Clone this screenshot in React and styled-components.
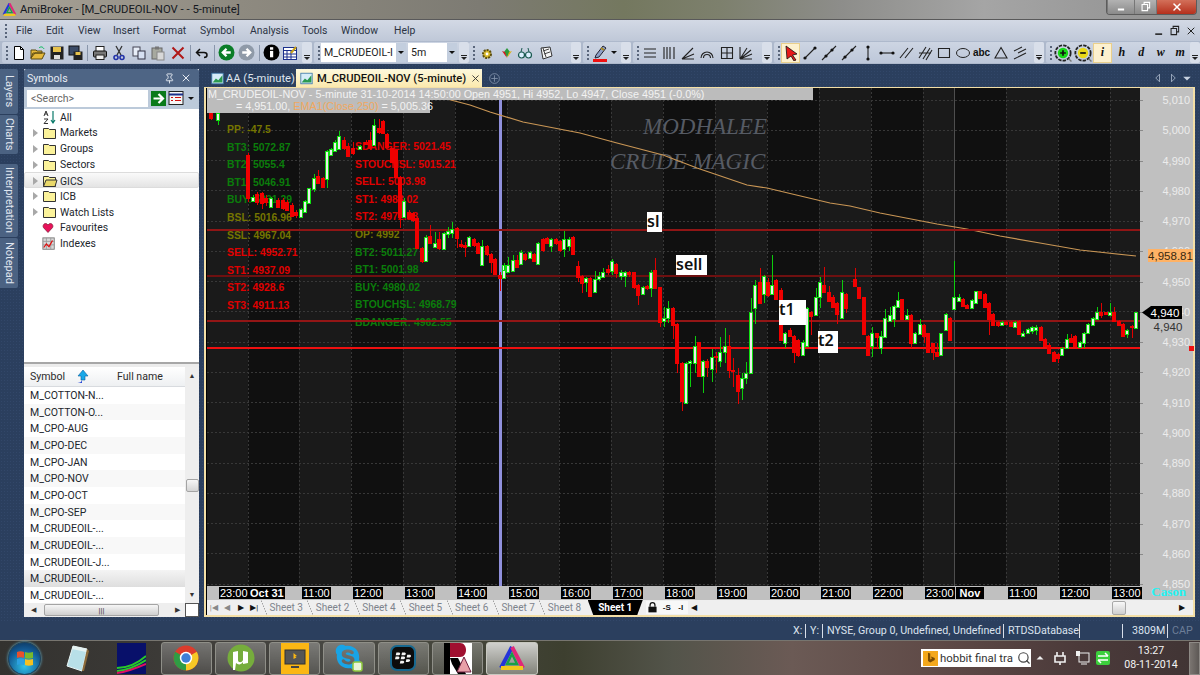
import React from 'react'
import styled, { createGlobalStyle } from 'styled-components'
import { FaBlackberry, FaSkype } from 'react-icons/fa'
import { Pin, X, Search } from 'lucide-react'

const GlobalStyle = createGlobalStyle`
    html, body { margin: 0; padding: 0; background: #2b3f5e; }
    * { box-sizing: border-box; }
    svg { flex: none; }
`

const UI = 'Roboto, "Noto Sans", sans-serif'
const CHART = '"Liberation Sans", Arial, sans-serif'

const Page = styled.div`
    width: 1200px;
    height: 675px;
    overflow: hidden;
    display: flex;
    flex-direction: column;
    background: #2b3f5e;
    font-family: ${UI};
`

/* title bar */
const TitleBar = styled.div`
    height: 20px;
    flex: none;
    display: flex;
    align-items: center;
    padding-left: 2px;
    gap: 3px;
    font-size: 11.3px;
    color: #14181e;
    background: linear-gradient(90deg, #a8a297 0, #8e8a80 20%, #7d7b73 40%, #74785f 52%, #7d806d 60%, #8d8d8a 70%, #a5a5a5 82%, #8f8f8f 100%);
    border-bottom: 1px solid #59595a;
`
const WindowButtons = styled.div`
    margin-left: auto;
    margin-right: 3px;
    margin-top: -5px;
    height: 16px;
    display: flex;
    border: 1px solid #5c5c5c;
    border-top: 0;
    border-radius: 0 0 4px 4px;
    overflow: hidden;
`
const WindowButton = styled.span`
    width: ${p => p.$w}px;
    display: flex;
    align-items: center;
    justify-content: center;
    background: ${p => p.$close ? 'linear-gradient(#d5745e, #b5301c)' : 'linear-gradient(#b5b5b5, #8a8a8a)'};
    border-left: 1px solid #777;
`

/* menu */
const MenuBar = styled.div`
    height: 21px;
    flex: none;
    display: flex;
    align-items: center;
    padding-left: 4px;
    background: linear-gradient(#d3d9e5, #bfc8d8);
    font-size: 10.4px;
    color: #2c3444;
`
const Grip = styled.span`
    width: 4px;
    height: 15px;
    flex: none;
    background: radial-gradient(circle, #59657a 1px, transparent 1.2px) 0 0 / 4px 4px;
`
const MenuItem = styled.span`
    width: ${p => p.$w}px;
    flex: none;
`
const MdiButtons = styled.div`
    margin-left: auto;
    display: flex;
    gap: 5px;
    padding-right: 3px;
    align-items: center;
`

/* toolbar */
const ToolBar = styled.div`
    height: 23px;
    flex: none;
    display: flex;
    gap: 2px;
    padding: 1px 0 1px 2px;
    background: #aeb9cc;
`
const ToolGroup = styled.div`
    width: ${p => p.$w}px;
    flex: none;
    display: flex;
    align-items: center;
    padding-left: 3px;
    background: linear-gradient(#cdd5e3, #bdc7d9);
    border-radius: 2px;
`
const ToolBtn = styled.span`
    width: ${p => p.$w || 19}px;
    height: 20px;
    flex: none;
    display: flex;
    align-items: center;
    justify-content: center;
    ${p => p.$on && 'background: #fdf1cf; border: 1px solid #e9cf8c;'}
`
const ToolLetter = styled.span`
    font: bold italic 12px "Liberation Serif", serif;
    color: #111;
`
const ToolText = styled.span`
    font: bold 10px ${CHART};
    color: #111;
`
const ToolSep = styled.span`
    width: ${p => p.$w || 5}px;
    height: 16px;
    flex: none;
    background: linear-gradient(#8996ab, #8996ab) center / 1px 100% no-repeat;
`
const Overflow = styled.span`
    width: 10px;
    height: 21px;
    flex: none;
    margin-left: auto;
    display: flex;
    flex-direction: column;
    align-items: center;
    justify-content: flex-end;
    padding-bottom: 3px;
    gap: 1px;
    background: #d9dfea;
    border-radius: 2px;
    &::before { content: ''; width: 6px; height: 1px; background: #222; }
    &::after { content: ''; border: 3px solid transparent; border-top: 3px solid #222; border-bottom: 0; }
`
const Combo = styled.div`
    width: ${p => p.$w}px;
    height: 19px;
    flex: none;
    margin-right: 2px;
    display: flex;
    align-items: center;
    justify-content: space-between;
    padding-left: 3px;
    background: #fff;
    font-size: 10.6px;
    color: #222;
    white-space: nowrap;
    overflow: hidden;
`
const ComboArrow = styled.span`
    width: ${p => p.$w || 10}px;
    height: 19px;
    flex: none;
    display: flex;
    align-items: center;
    justify-content: center;
    background: ${p => p.$bare ? 'transparent' : '#c3cede'};
    &::after { content: ''; border: 3px solid transparent; border-top: 3px solid #111; border-bottom: 0; }
`

/* workspace */
const Workspace = styled.div`
    height: 558px;
    flex: none;
    display: flex;
    padding-top: 5px;
    background: #2b3f5e radial-gradient(circle, #324769 0.6px, transparent 0.8px) 0 0 / 3px 3px;
`
const SideTabs = styled.div`
    width: 24px;
    flex: none;
    display: flex;
    flex-direction: column;
    align-items: flex-start;
`
const SideTab = styled.div`
    width: 18px;
    height: ${p => p.$h}px;
    margin-bottom: ${p => p.$gap || 1}px;
    writing-mode: vertical-rl;
    display: flex;
    align-items: center;
    justify-content: center;
    font-size: 11px;
    color: #e0e6f0;
    background: #4b6282;
    border-radius: 0 2px 2px 0;
`

/* symbols panel */
const Panel = styled.div`
    width: 175px;
    height: 548px;
    flex: none;
    margin-right: 5px;
    display: flex;
    flex-direction: column;
    background: #fff;
`
const PanelHead = styled.div`
    height: 18px;
    flex: none;
    display: flex;
    align-items: center;
    justify-content: space-between;
    padding: 0 4px 0 3px;
    font-size: 10.6px;
    color: #e6ebf3;
    background: #4e6585;
    border-radius: 2px 2px 0 0;
`
const SearchRow = styled.div`
    height: 22px;
    flex: none;
    display: flex;
    align-items: center;
    padding-left: 3px;
    background: #bccada;
`
const SearchInput = styled.div`
    width: 121px;
    height: 17px;
    flex: none;
    margin-right: 3px;
    padding-left: 4px;
    font-size: 10.5px;
    line-height: 17px;
    color: #666;
    background: #fff;
`
const Tree = styled.div`
    height: 253px;
    flex: none;
    background: #fff;
`
const TreeRow = styled.div`
    height: 15.85px;
    display: grid;
    grid-template-columns: 10px 18px 1fr;
    align-items: center;
    padding-left: 8px;
    font-size: 10.4px;
    color: #22262c;
    ${p => p.$sel && 'background: linear-gradient(#fafafa, #e4e4e4); border: 1px solid #dcdcdc; border-radius: 2px; padding-left: 7px;'}
`
const Expander = styled.span`
    width: 0;
    height: 0;
    margin-left: 1px;
    ${p => p.$show && 'border: 4px solid transparent; border-left: 5px solid #a8a8a8; border-right: 0;'}
`
const Splitter = styled.div`
    height: 5px;
    flex: none;
    background: linear-gradient(#a7a7a7 0 2px, #ececec 2px);
`
const ListWrap = styled.div`
    flex: 1;
    display: flex;
    min-height: 0;
`
const ListMain = styled.div`
    width: 161px;
    flex: none;
    overflow: hidden;
`
const ListHead = styled.div`
    height: 20px;
    display: grid;
    grid-template-columns: 87px 1fr;
    align-items: center;
    padding-left: 6px;
    font-size: 10.6px;
    color: #2c2c2c;
    background: linear-gradient(#fff, #eef0f2);
    border-bottom: 1px solid #d8dbdf;
`
const ListHeadCell = styled.span`
    display: flex;
    align-items: center;
    gap: 9px;
`
const ListRow = styled.div`
    height: 16.67px;
    padding-left: 6px;
    font-size: 10.5px;
    line-height: 17px;
    color: #22262c;
    background: ${p => p.$sel ? 'linear-gradient(#f4f4f4, #dedede)' : p.$odd ? '#f8f8f8' : '#fff'};
`
const VScroll = styled.div`
    width: 14px;
    height: 236px;
    flex: none;
    display: flex;
    flex-direction: column;
    align-items: center;
    justify-content: space-between;
    padding: 5px 0 4px;
    background: #eeeeee;
    font-size: 7px;
    color: #333;
`
const ScrollThumb = styled.span`
    width: 13px;
    height: 13px;
    flex: none;
    background: linear-gradient(#f6f6f6, #d4d4d4);
    border: 1px solid #a4a4a4;
    border-radius: 2px;
`
const HScroll = styled.div`
    height: 14px;
    flex: none;
    display: flex;
    align-items: center;
    padding-left: 7px;
    font-size: 7px;
    color: #333;
    background: #eeeeee;
`
const HThumb = styled.span`
    width: 115px;
    height: 12px;
    margin: 0 16px 0 8px;
    display: flex;
    align-items: center;
    justify-content: center;
    font-size: 8px;
    background: linear-gradient(#f6f6f6, #cfcfcf);
    border: 1px solid #a4a4a4;
    border-radius: 2px;
`
const Corner = styled.span`
    width: 14px;
    height: 14px;
    margin-left: 5px;
    background: #fff;
    border: 1px solid #555;
`

/* document area */
const Doc = styled.div`
    width: 991px;
    height: 548px;
    flex: none;
    display: flex;
    flex-direction: column;
`
const DocTabs = styled.div`
    height: 18px;
    flex: none;
    display: flex;
    align-items: flex-end;
    padding-left: 5px;
    gap: 2px;
    font-size: 11.2px;
`
const DocTab = styled.div`
    width: ${p => p.$w}px;
    height: 18px;
    flex: none;
    display: flex;
    align-items: center;
    gap: ${p => p.$on ? 4 : 2}px;
    padding-left: ${p => p.$on ? 4 : 2}px;
    color: ${p => p.$on ? '#111' : '#dfe5ee'};
    font-weight: ${p => p.$on ? 500 : 400};
    background: ${p => p.$on ? 'linear-gradient(#fdf8dc, #fbe9ae)' : 'transparent'};
    white-space: nowrap;
`
const TabClose = styled.span`
    display: flex;
    margin-left: auto;
    padding-right: 5px;
`
const NewTab = styled.span`
    display: flex;
    margin-left: 4px;
    height: 18px;
    align-items: center;
`
const DocArrows = styled.div`
    margin-left: auto;
    padding-right: 3px;
    display: flex;
    align-items: center;
    gap: 3px;
    height: 18px;
`
const ChartFrame = styled.div`
    height: 530px;
    flex: none;
    display: flex;
    flex-direction: column;
    border: 2px solid #f3dfa6;
    border-top-width: 1px;
    background: #000;
`
const ChartRow = styled.div`
    height: 498px;
    flex: none;
    display: flex;
    padding-left: 1px;
`
const Plot = styled.div`
    position: relative;
    width: 933px;
    height: 498px;
    flex: none;
    overflow: hidden;
`
const PlotLayer = styled.svg`
    position: absolute;
    left: 0;
    top: 0;
    z-index: ${p => p.$z || 0};
`
const InfoBox = styled.div`
    position: absolute;
    left: 0;
    top: 0;
    z-index: 3;
    font: 10.8px/12px ${CHART};
    color: #f2f2f2;
`
const InfoLine = styled.div`
    width: ${p => p.$w}px;
    height: ${p => p.$h}px;
    padding-left: ${p => p.$pad}px;
    background: #bcbcbc;
    white-space: nowrap;
`
const EmaText = styled.span`
    color: #f0a860;
`
const Levels = styled.div`
    position: absolute;
    left: ${p => p.$x}px;
    top: ${p => p.$y}px;
    z-index: 1;
    display: flex;
    flex-direction: column;
    font: bold 10.4px/17.6px ${CHART};
    white-space: nowrap;
`
const Level = styled.span`
    color: ${p => p.$c};
`
const Watermark = styled.div`
    position: absolute;
    left: ${p => p.$x}px;
    top: ${p => p.$y}px;
    z-index: 1;
    font: italic 23px "Liberation Serif", serif;
    color: #565b64;
    white-space: nowrap;
`
const Note = styled.div`
    position: absolute;
    left: ${p => p.$x}px;
    top: ${p => p.$y}px;
    width: ${p => p.$w}px;
    height: ${p => p.$h}px;
    z-index: 3;
    background: #fff;
    font: 600 16px/18px "Noto Sans", sans-serif;
    color: #111;
`
const PriceAxis = styled.div`
    position: relative;
    width: 53px;
    height: 498px;
    flex: none;
    z-index: 2;
    background: #c0c0c0;
`
const PriceList = styled.div`
    display: flex;
    flex-direction: column;
    margin-top: -3px;
`
const PriceRow = styled.div`
    position: relative;
    height: 30.25px;
    flex: none;
    display: flex;
    align-items: center;
    justify-content: flex-end;
    padding-right: 3px;
    font: 11px ${CHART};
    color: #ececec;
    &::before {
        content: '';
        position: absolute;
        left: 0;
        top: 50%;
        width: 3px;
        height: 1px;
        background: #8a8a8a;
    }
`
const PriceTag = styled.div`
    position: absolute;
    left: ${p => p.$x}px;
    top: ${p => p.$y}px;
    width: ${p => p.$w}px;
    height: 13px;
    display: flex;
    align-items: center;
    justify-content: center;
    font: 11.5px ${CHART};
    color: ${p => p.$c};
    background: ${p => p.$bg};
    ${p => p.$arrow && 'clip-path: polygon(0 50%, 9px 0, 100% 0, 100% 100%, 9px 100%); padding-left: 6px;'}
`
const RedMark = styled.span`
    position: absolute;
    left: 49px;
    top: 258px;
    width: 5px;
    height: 5px;
    background: #f01010;
`
const TimeAxis = styled.div`
    position: relative;
    height: 14px;
    flex: none;
    margin-left: 1px;
    background: #c0c0c0;
`
const TimeTag = styled.span`
    position: absolute;
    left: ${p => p.$x}px;
    top: 1px;
    min-width: 28px;
    height: 12px;
    padding: 0 1px;
    text-align: center;
    font: ${p => p.$bold ? 'bold ' : ''}11px/12px ${CHART};
    color: #fff;
    background: #000;
`
const Cason = styled.span`
    position: absolute;
    right: 7px;
    top: -1px;
    z-index: 3;
    font: bold 13px/14px "Liberation Serif", serif;
    color: #22f4f4;
`
const SheetBar = styled.div`
    height: 15px;
    flex: none;
    display: flex;
    align-items: center;
    margin-left: 1px;
    font-size: 10px;
    color: #7d838c;
    background: #efefef;
`
const SheetNav = styled.span`
    width: 13.5px;
    height: 15px;
    flex: none;
    margin-left: ${p => p.$x || 0}px;
    display: flex;
    align-items: center;
    justify-content: center;
    font-size: 8px;
    color: ${p => p.$dim ? '#888' : '#111'};
`
const SheetTab = styled.span`
    position: relative;
    width: 46.4px;
    height: 15px;
    flex: none;
    text-align: center;
    line-height: 15px;
    &::before {
        content: '';
        position: absolute;
        left: -2px;
        top: 0;
        width: 6px;
        height: 15px;
        background: linear-gradient(to top right, transparent 46%, #8d8d8d 50%, transparent 54%);
    }
`
const SheetTabs = styled.div`
    display: flex;
    margin-left: 2px;
`
const ActiveSheet = styled.span`
    width: 55px;
    height: 15px;
    flex: none;
    text-align: center;
    font-weight: 700;
    line-height: 15px;
    color: #fff;
    background: #000;
    clip-path: polygon(0 0, 100% 0, 90% 100%, 10% 100%);
`
const SheetIcon = styled.span`
    width: 14px;
    height: 13px;
    flex: none;
    margin-left: ${p => p.$x || 0}px;
    display: flex;
    align-items: center;
    justify-content: center;
    font: bold 8px ${CHART};
    color: #111;
    background: #f8f8f8;
`
const SheetScroll = styled.span`
    width: 14px;
    height: 14px;
    flex: none;
    margin-left: ${p => p.$x}px;
    background: linear-gradient(#f8f8f8, #cfcfcf);
    border: 1px solid #a8a8a8;
    border-radius: 2px;
`

/* status bar */
const StatusBar = styled.div`
    height: 18px;
    flex: none;
    display: flex;
    align-items: center;
    padding-left: 793px;
    font-size: 10.7px;
    color: #dce3ee;
    background: #2b3f5e;
`
const StatusCell = styled.span`
    width: ${p => p.$w}px;
    height: 14px;
    flex: none;
    line-height: 14px;
    white-space: nowrap;
    padding-left: ${p => p.$pad || 0}px;
    border-right: ${p => p.$last ? '0' : '1px solid #d8dfea'};
    margin-right: 4px;
    color: ${p => p.$dim ? '#6d7e98' : 'inherit'};
`

/* taskbar */
const TaskBar = styled.div`
    height: 35px;
    flex: none;
    display: flex;
    align-items: center;
    gap: 3px;
    border-top: 1px solid #77756f;
    background: linear-gradient(90deg, #33322f 0, #3b3936 12%, #4a4a45 30%, #3d3f2f 47%, #53544a 56%, #6b5a55 66%, #5f4a47 78%, #4b3a3a 90%, #403434 100%);
`
const TaskSlot = styled.div`
    width: ${p => p.$w || 51.3}px;
    height: 33px;
    flex: none;
    display: flex;
    align-items: center;
    justify-content: center;
    border-radius: 3px;
    ${p => p.$open && 'border: 1px solid #8f8f88; background: linear-gradient(rgba(255,255,255,.28), rgba(255,255,255,.08));'}
    ${p => p.$on && 'border: 1px solid #c8c8c0; background: linear-gradient(rgba(255,255,255,.75), rgba(255,255,255,.35));'}
`
const Orb = styled.div`
    width: 33px;
    height: 33px;
    display: flex;
    align-items: center;
    justify-content: center;
    border-radius: 50%;
    border: 1px solid #1c4a6a;
    background: radial-gradient(circle at 50% 75%, #2fc3e8, #135a94 60%, #0b2c50);
    box-shadow: 0 0 3px #6fc8e8;
`
const BlackberryTile = styled.div`
    width: 26px;
    height: 26px;
    display: flex;
    align-items: center;
    justify-content: center;
    border-radius: 7px;
    border: 2px solid #17688f;
    background: #0c0c0c;
`
const Tray = styled.div`
    margin-left: auto;
    display: flex;
    align-items: center;
    height: 33px;
`
const TraySearch = styled.div`
    width: 110px;
    height: 18px;
    flex: none;
    display: flex;
    align-items: center;
    gap: 2px;
    padding: 0 2px;
    margin-right: 2px;
    font-size: 11.4px;
    color: #333;
    background: #fff;
    overflow: hidden;
`
const BingBox = styled.span`
    width: 15px;
    height: 15px;
    flex: none;
    display: flex;
    align-items: center;
    justify-content: center;
    background: #f4a81c;
`
const SearchText = styled.span`
    width: 75px;
    flex: none;
    white-space: nowrap;
`
const TrayIcon = styled.span`
    width: ${p => p.$w}px;
    flex: none;
    display: flex;
    justify-content: center;
`
const Clock = styled.div`
    width: 76px;
    flex: none;
    text-align: center;
    font-size: 10.6px;
    line-height: 14.5px;
    color: #f4f4f4;
`
const ShowDesktop = styled.span`
    width: 11px;
    height: 33px;
    flex: none;
    background: linear-gradient(90deg, #7b7571, #5d5855);
    border: 1px solid #8e8a86;
`

/* icons */
const I = ({ s = 16, children }) => <svg width={s} height={s} viewBox="0 0 16 16" fill="none">{children}</svg>

const DocIcon = () => <I><path d="M3.5 1.5h6l3 3v10h-9z" fill="#fff" stroke="#000" /><path d="M9.5 1.5v3h3" stroke="#000" /></I>
const OpenIcon = () => <I><path d="M1 13V5h5l1 1h5v2H5l-4 5 2-5h12l-3 6H1z" fill="#e5b93b" stroke="#5a4a12" /><path d="M9 3c2-2 4-1 5 1" stroke="#0b5" /></I>
const SaveIcon = () => <I><rect x="1.5" y="1.5" width="13" height="13" fill="#222" /><rect x="4" y="2" width="8" height="5" fill="#e7c24d" /><rect x="5" y="10" width="6" height="4" fill="#ddd" /></I>
const SaveAllIcon = () => <I><rect x="1" y="1" width="10" height="9" fill="#3a4a66" stroke="#111" /><rect x="5.5" y="6.5" width="9" height="8.5" fill="#222" /><rect x="7.5" y="7" width="5" height="3" fill="#e7c24d" /></I>
const PrintIcon = () => <I><rect x="4" y="1.5" width="8" height="5" fill="#fff" stroke="#222" /><rect x="1.5" y="6" width="13" height="6" rx="1" fill="#777" stroke="#111" /><rect x="4" y="10" width="8" height="4.5" fill="#eee" stroke="#222" /></I>
const CutIcon = () => <I><path d="M5 1l5 9M11 1L6 10" stroke="#333" strokeWidth="1.3" /><circle cx="5" cy="12.5" r="2" stroke="#2333a8" strokeWidth="1.6" /><circle cx="11" cy="12.5" r="2" stroke="#2333a8" strokeWidth="1.6" /></I>
const CopyIcon = () => <I><rect x="2" y="2" width="7" height="9" fill="#e8eef8" stroke="#445" /><rect x="7" y="6" width="7" height="8" fill="#d6e0f2" stroke="#334" /></I>
const PasteIcon = () => <I><rect x="2" y="3" width="10" height="11" fill="#a7a99f" stroke="#666" /><rect x="5" y="1.5" width="4" height="3" fill="#777" /><rect x="7" y="7" width="7" height="8" fill="#d8d8d8" stroke="#888" /></I>
const DeleteIcon = () => <I><path d="M2.5 2.5l11 11M13.5 2.5l-11 11" stroke="#b01818" strokeWidth="2" /></I>
const UndoIcon = () => <I><path d="M6 4L2.5 7.5 6 11M3 7.5h7c4 0 4 5 0 5" stroke="#111" strokeWidth="1.5" /></I>
const NavIcon = ({ bg, dir }) => <I s={17}><circle cx="8" cy="8" r="7.5" fill={bg} /><path d={dir < 0 ? 'M12 8H5m3-3.5L4.5 8 8 11.5' : 'M4 8h7M8 4.5L11.5 8 8 11.5'} stroke="#fff" strokeWidth="2.2" /></I>
const InfoIcon = () => <I s={17}><circle cx="8" cy="8" r="7.5" fill="#000" /><rect x="6.6" y="6.5" width="3" height="6" fill="#fff" /><rect x="6.6" y="3" width="3" height="2.4" fill="#fff" /></I>
const TableIcon = () => <I><rect x="1.5" y="2.5" width="13" height="12" fill="#fff" stroke="#1a2f8c" /><path d="M1.5 5.5h13M5 6v8M9 6v8M2 9h12M2 12h12" stroke="#1a2f8c" /><path d="M9 8l5-6" stroke="#c8a018" strokeWidth="2" /></I>
const GearIcon = () => <I><circle cx="8" cy="9" r="4" fill="#d8b828" stroke="#5c4e10" strokeDasharray="2 1" strokeWidth="2" /><circle cx="8" cy="9" r="1.4" fill="#fff" /></I>
const GemIcon = () => <I><path d="M8 3l3 4-3 5-3-5z" fill="#2c9a3c" /><path d="M3 6l3 1 2 6z" fill="#d8181c" /><path d="M13 6l-3 1-2 6z" fill="#e0b018" /></I>
const GlassesIcon = () => <I><circle cx="4.5" cy="10" r="3" fill="#dcefff" stroke="#1a5a50" strokeWidth="1.2" /><circle cx="11.5" cy="10" r="3" fill="#dcefff" stroke="#1a5a50" strokeWidth="1.2" /><path d="M4 7l1-4M12 7l-1-4M7.5 9h1" stroke="#1a5a50" /></I>
const MapIcon = () => <I><path d="M3 3l9-1 2 9-9 3z" fill="#f4f4f4" stroke="#333" /><path d="M5 6l6-2M6 9l6-2M5 3l3 9" stroke="#444" /></I>
const PenIcon = () => <svg width="17" height="20" viewBox="0 0 17 20" fill="none"><path d="M4 12l7-9 3 2-7 9-4 1z" fill="#8ea0c8" stroke="#223" /><path d="M9 5l3 2" stroke="#a88a20" strokeWidth="2" /><rect x="1" y="16" width="14" height="3" fill="#f01010" /></svg>
const ArrowCursor = () => <I><path d="M3 1l11 8-4.5 1 3.5 5-2 1-3-5L4 14z" fill="#e81818" stroke="#111" strokeWidth=".8" /></I>
const LineTool = ({ d, dots = [] }) => <I><path d={d} stroke="#222" strokeWidth="1.1" />{dots.map(([x, y]) => <circle key={x + '-' + y} cx={x} cy={y} r="1.6" fill="#111" />)}</I>
const ZoomIcon = ({ c, plus }) => <I s={18}><circle cx="8" cy="8" r="6.8" stroke="#222" strokeWidth="1.6" strokeDasharray="3 1" /><circle cx="8" cy="8" r="4.6" fill={c} /><path d={plus ? 'M5.5 8h5M8 5.500v5' : 'M5.5 8h5'} stroke="#111" strokeWidth="1.5" /><path d="M13 13l2.500 2.500" stroke="#777" strokeWidth="1.2" /></I>
const FolderIcon = ({ open }) => <I><path d="M1.5 13.5v-10h5l1 1h6v9z" fill="#fbf29a" stroke="#333" />{open && <path d="M4 7h11l-2 6.5H1.5z" fill="#e9d86a" stroke="#333" />}</I>
const AzIcon = () => <I><path d="M2 7l2-5 2 5M2.8 5h2.4M2 10h4l-4 4.5h4" stroke="#333" /><path d="M11 2v11M9 11l2 3 2-3" stroke="#0a7a6a" strokeWidth="1.2" /></I>
const HeartIcon = () => <I s={12}><path d="M8 14L2 7.5C0 4.5 4-1 8 4c4-5 8 .5 6 3.5z" fill="#e8125a" stroke="#80203a" /></I>
const IndexIcon = () => <I s={14}><rect x="1" y="1" width="13" height="13" fill="#d8d8d8" stroke="#777" /><path d="M1 5h13M1 9h13M5 1v13M10 1v13" stroke="#999" /><path d="M2 12l3-4 3 3 4-7" stroke="#e01010" strokeWidth="1.4" /></I>
const ListIcon = () => <I><rect x="1" y="1.5" width="14" height="13" fill="#f6f6f6" stroke="#222" /><path d="M1 4.5h14" stroke="#1a2f8c" strokeWidth="2" /><path d="M3 7.5h2M3 10.5h2M7 7.5h6M7 10.5h6" stroke="#d01010" /></I>
const GoIcon = () => <svg width="15" height="15" viewBox="0 0 15 15"><rect width="15" height="15" fill="#0a7a1a" /><path d="M2.5 7.5h9M7.5 3l4.5 4.5L7.5 12" stroke="#fff" strokeWidth="2.2" fill="none" /></svg>
const SortIcon = () => <I><path d="M9 1l5 6h-3v4H7V7H4z" fill="#18a8e8" stroke="#0a60a0" strokeWidth=".6" /><path d="M2 14c4 0 6-1 6-4v4z" fill="#2848d8" /></I>
const LockIcon = () => <I s={13}><path d="M5 7V5a3 3 0 016 0v2" stroke="#111" strokeWidth="1.5" /><rect x="3" y="7" width="10" height="7" fill="#111" /></I>
const ChartTabIcon = () => <I s={13}><rect x="1" y="1.5" width="14" height="13" fill="#d6ecf8" stroke="#3a76a8" /><path d="M2 13l4-5 3 2 5-6v9z" fill="#2a9a50" /></I>

const WindowsFlag = () => (
    <svg width="20" height="20" viewBox="0 0 20 20">
        <path d="M2 4c2-1 5-1 7 0v6c-2-1-5-1-7 0z" fill="#e8502c" />
        <path d="M10 4c2 1 5 1 8 0v6c-3 1-6 1-8 0z" fill="#78b82c" />
        <path d="M2 11c2-1 5-1 7 0v6c-2-1-5-1-7 0z" fill="#2ca0e0" />
        <path d="M10 11c2 1 5 1 8 0v6c-3 1-6 1-8 0z" fill="#f4c020" />
    </svg>
)
const ChromeIcon = () => (
    <svg width="26" height="26" viewBox="0 0 26 26">
        <circle cx="13" cy="13" r="12.5" fill="#dd3c2c" />
        <path d="M13 13L23.8 6.8A12.5 12.5 0 0 1 13 25.5z" fill="#f6c825" />
        <path d="M13 13L13 25.5A12.5 12.5 0 0 1 2.2 6.8z" fill="#2f9c44" />
        <circle cx="13" cy="13" r="6.2" fill="#fff" />
        <circle cx="13" cy="13" r="4.7" fill="#3f7fd8" />
    </svg>
)
const TorrentIcon = () => (
    <svg width="28" height="28" viewBox="0 0 28 28">
        <circle cx="14" cy="14" r="13.5" fill="#76ad3c" />
        <path d="M6 8l5-1v9c0 3 4 3 5 0V7l5 1v11l-5 1v-2c-2 3-5 3-7 1l-1 7H6z" fill="#fff" />
    </svg>
)
const BingScreen = () => (
    <svg width="28" height="31" viewBox="0 0 28 31">
        <rect width="28" height="31" fill="#fbb714" />
        <rect x="4" y="7" width="20" height="14" fill="#555" stroke="#333" />
        <path d="M12.5 10v6l3-1.500-1.500-1 2-.5z" fill="#fbb714" />
        <rect x="10" y="23" width="8" height="2" fill="#444" />
    </svg>
)
const SkypeIcon = () => (
    <svg width="30" height="30" viewBox="0 0 30 30">
        <foreignObject width="28" height="28"><FaSkype size={28} color="#18a4e6" /></foreignObject>
        <rect x="19" y="19" width="9" height="9" rx="2" fill="#e8f4d8" stroke="#8cc83c" strokeWidth="1.5" />
    </svg>
)
const NotepadIcon = () => (
    <svg width="26" height="28" viewBox="0 0 26 28">
        <path d="M8 2l14 3-5 22-15-5z" fill="#b8e0e8" stroke="#e8f4f4" />
        <path d="M8 2l14 3-1 3L7 5z" fill="#e4f2f2" />
        <path d="M22 5l2 2-5 20-2 0z" fill="#8a6a3a" />
    </svg>
)
const WaveTile = () => (
    <svg width="29" height="31" viewBox="0 0 29 31">
        <rect width="29" height="31" fill="#08106a" />
        <path d="M0 25c10 0 20-4 29-12M0 28c10-1 20-5 29-11" stroke="#28c828" strokeWidth="2" fill="none" />
        <path d="M0 30c10-1 20-5 29-9" stroke="#e01060" strokeWidth="2" fill="none" />
    </svg>
)
const RTile = () => (
    <svg width="28" height="31" viewBox="0 0 28 31">
        <rect width="28" height="31" fill="#fff" />
        <rect width="6" height="31" fill="#000" />
        <path d="M6 0h10c8 0 8 14 0 14H6z" fill="#a01030" />
        <path d="M6 15h8l8 16h-8l-6-10z" fill="#000" />
        <path d="M20 14l7 15H13z" fill="#e8a0a8" stroke="#702040" />
    </svg>
)
const ProgramLogo = ({ s = 28 }) => (
    <svg width={s} height={s} viewBox="0 0 28 28" fill="none">
        <path d="M14 3L3 24" stroke="#2434d8" strokeWidth="4" />
        <path d="M14 3l11 21" stroke="#e02878" strokeWidth="4" />
        <path d="M3 24h22" stroke="#f2c81c" strokeWidth="4" />
        <path d="M14 10l-5 10h10z" stroke="#18a048" strokeWidth="2.4" />
    </svg>
)

/* chart data: rows are [x, bodyTop, bodyBottom, up, wickTop, wickBottom] read off 3x crops */
const D = 0
const U = 1
const left = [
    [18, 85, 100, D, 80, 105], [38, 85, 105, U, 80, 120], [130, 210, 340, D, 205, 352], [143, 335, 348, U, 330, 352], [157, 328, 350, D, 320, 360],
    [170, 325, 355, D, 320, 372], [183, 338, 350, D, 330, 362], [197, 338, 365, U, 335, 368], [220, 345, 365, D, 340, 370], [233, 345, 370, D, 340, 375],
    [247, 352, 375, D, 345, 378], [260, 360, 393, D, 355, 396], [273, 380, 390, D, 375, 398], [287, 372, 395, U, 368, 398], [300, 348, 382, U, 344, 385],
    [313, 310, 355, U, 308, 358], [327, 280, 312, U, 266, 320], [340, 272, 295, D, 255, 298], [353, 280, 305, D, 275, 308], [366, 198, 282, U, 195, 308],
    [379, 192, 210, U, 188, 212], [390, 172, 198, U, 165, 200], [403, 153, 192, U, 138, 195], [416, 165, 190, D, 155, 195], [429, 182, 212, D, 175, 214],
    [443, 190, 205, D, 170, 210], [466, 183, 193, U, 180, 196], [482, 170, 178, D, 165, 180], [495, 165, 190, D, 140, 195], [508, 120, 180, U, 103, 182],
    [521, 128, 140, D, 103, 146], [533, 108, 145, D, 104, 148], [547, 147, 185, D, 145, 190], [560, 190, 230, D, 188, 232], [573, 195, 275, D, 192, 278],
    [585, 275, 395, D, 272, 430], [598, 348, 395, U, 340, 400], [611, 380, 400, D, 375, 405], [624, 385, 405, D, 380, 410], [637, 400, 490, D, 398, 492],
    [650, 488, 528, D, 485, 535], [663, 455, 528, U, 450, 530], [676, 452, 475, D, 420, 478], [689, 475, 485, U, 440, 490], [702, 462, 490, D, 440, 495],
    [716, 445, 493, U, 440, 495], [729, 437, 447, U, 425, 460], [742, 432, 445, U, 410, 460], [755, 428, 460, D, 425, 490], [768, 478, 484, D, 465, 490],
    [781, 480, 486, D, 470, 515], [793, 455, 482, U, 452, 485], [806, 462, 480, D, 460, 485], [819, 473, 503, D, 470, 505], [832, 483, 540, U, 465, 542],
    [845, 483, 508, D, 480, 512], [858, 507, 530, D, 505, 565], [871, 522, 568, D, 520, 570], [884, 570, 578, D, 560, 618], [897, 540, 580, U, 535, 582],
]
const middle = [
    [12, 210, 235, U, 190, 238], [25, 195, 215, U, 170, 220], [38, 180, 212, U, 165, 214], [51, 180, 200, D, 165, 203], [63, 155, 192, U, 150, 195],
    [76, 163, 178, D, 160, 182], [89, 155, 175, U, 152, 177], [102, 162, 183, D, 160, 186], [115, 128, 192, U, 125, 195], [128, 118, 150, D, 115, 155],
    [141, 113, 130, D, 110, 133], [154, 118, 138, U, 115, 155], [167, 118, 130, D, 115, 135], [180, 123, 150, D, 120, 155], [193, 118, 148, U, 93, 170],
    [206, 118, 138, U, 112, 152], [220, 110, 163, D, 108, 165], [233, 198, 230, D, 183, 245], [246, 227, 250, D, 225, 280], [258, 235, 245, U, 232, 275],
    [271, 235, 288, D, 232, 292], [284, 237, 275, U, 213, 278], [297, 228, 238, U, 215, 242], [310, 217, 230, U, 205, 232], [323, 208, 215, D, 195, 225],
    [336, 182, 212, U, 178, 226], [349, 192, 218, D, 188, 235], [362, 216, 227, U, 210, 240], [375, 216, 227, U, 212, 262], [388, 217, 222, D, 214, 230],
    [401, 217, 262, D, 215, 266], [414, 255, 285, D, 252, 316], [428, 262, 283, U, 258, 285], [440, 258, 263, D, 255, 270], [453, 215, 263, U, 210, 290],
    [466, 210, 263, D, 175, 266], [479, 262, 365, D, 260, 380], [492, 355, 362, U, 320, 380], [505, 325, 355, U, 302, 370], [518, 325, 375, D, 320, 418],
    [532, 372, 490, D, 370, 518], [545, 490, 602, D, 485, 632], [558, 490, 608, U, 485, 610], [571, 482, 490, U, 480, 562], [584, 437, 490, U, 408, 518],
    [597, 427, 527, D, 425, 530], [610, 482, 527, U, 480, 580], [622, 482, 500, D, 478, 530], [635, 472, 508, U, 448, 545], [648, 468, 471, D, 455, 518],
    [661, 455, 482, U, 410, 500], [674, 437, 455, U, 385, 490], [687, 437, 510, D, 405, 535], [700, 510, 512, D, 475, 560], [713, 525, 572, D, 505, 612],
    [726, 535, 565, U, 520, 600], [739, 518, 535, U, 485, 552], [752, 337, 518, U, 295, 520], [766, 255, 325, U, 240, 372], [779, 245, 308, D, 203, 310],
    [792, 228, 282, U, 225, 308], [805, 245, 285, D, 235, 290], [815, 255, 282, U, 165, 284], [829, 240, 297, D, 238, 300], [843, 270, 420, D, 265, 424],
    [856, 400, 428, U, 395, 445], [869, 390, 408, D, 385, 412], [882, 408, 455, D, 405, 488], [895, 420, 465, D, 418, 470], [908, 427, 465, U, 420, 468],
    [921, 325, 437, U, 320, 440], [934, 335, 347, D, 333, 405], [947, 292, 345, U, 265, 348], [960, 245, 292, U, 232, 325], [973, 255, 275, D, 202, 278],
    [986, 275, 302, D, 258, 305], [999, 290, 320, D, 285, 322], [1012, 308, 342, D, 305, 372], [1025, 275, 355, U, 240, 358], [1038, 282, 325, D, 280, 340],
]
const right = [
    [14, 238, 258, D, 203, 262], [27, 262, 295, D, 260, 298], [41, 292, 402, D, 290, 405], [54, 408, 465, D, 405, 468], [67, 400, 438, U, 380, 470],
    [80, 400, 412, D, 398, 445], [93, 408, 445, U, 392, 462], [106, 355, 410, U, 328, 412], [119, 345, 362, U, 322, 365], [131, 318, 358, U, 316, 380],
    [144, 300, 320, U, 277, 322], [157, 298, 356, D, 296, 358], [170, 345, 356, U, 328, 358], [183, 345, 430, D, 342, 445], [196, 400, 428, U, 396, 430],
    [209, 373, 402, U, 358, 405], [222, 375, 408, D, 372, 428], [235, 400, 455, D, 398, 458], [248, 430, 455, D, 428, 480], [261, 455, 467, D, 430, 470],
    [274, 400, 465, U, 398, 468], [287, 342, 390, U, 338, 392], [300, 355, 420, D, 352, 422], [313, 292, 327, U, 183, 329], [326, 292, 302, U, 282, 304],
    [339, 297, 318, D, 295, 320], [352, 315, 323, D, 312, 326], [365, 300, 323, U, 298, 325], [378, 274, 308, U, 272, 310], [391, 274, 295, D, 272, 298],
    [404, 282, 320, D, 280, 322], [417, 308, 357, D, 306, 405], [430, 342, 375, D, 340, 378], [443, 366, 376, D, 362, 380], [456, 366, 375, U, 362, 378],
    [469, 366, 372, D, 362, 376], [482, 366, 378, D, 362, 380], [495, 366, 382, U, 362, 384], [508, 362, 402, D, 360, 405], [520, 398, 408, U, 394, 410],
    [533, 388, 400, U, 384, 403], [546, 382, 392, U, 378, 402], [559, 380, 390, U, 376, 404], [572, 380, 420, D, 378, 422], [585, 418, 438, D, 415, 440],
    [598, 435, 458, D, 430, 460], [611, 456, 482, D, 454, 484], [624, 462, 475, D, 460, 488], [637, 445, 465, U, 442, 468], [650, 417, 445, U, 402, 447],
    [663, 415, 425, D, 402, 428], [676, 408, 438, D, 406, 442], [689, 427, 440, U, 424, 442], [702, 400, 428, U, 396, 445], [715, 372, 400, U, 368, 402],
    [728, 355, 375, U, 352, 377], [741, 337, 357, U, 320, 360], [754, 337, 345, D, 310, 355], [767, 337, 342, D, 335, 345], [780, 337, 345, U, 310, 348],
    [793, 337, 362, D, 320, 365], [806, 362, 375, D, 360, 378], [819, 372, 408, D, 370, 410], [832, 390, 402, U, 386, 415], [845, 378, 380, D, 375, 415],
    [858, 337, 385, U, 335, 388],
]
const place = (rows, ox, oy) => rows.map(([x, t, b, up, wt, wb]) => ({
    x: Math.round(ox + x / 3 - 207), top: Math.round(oy + t / 3 - 88), bottom: Math.round(oy + b / 3 - 88),
    up, wickTop: oy + wt / 3 - 88, wickBottom: oy + wb / 3 - 88,
}))
const candles = [...place(left, 205, 85), ...place(middle, 500, 200), ...place(right, 850, 200)]

const priceY = p => Math.floor(12 + (5010 - p) * 3.025) + 0.5
const prices = []
for (let p = 5010; p >= 4850; p -= 10) prices.push(p)
const hours = [299, 351, 403, 455, 507, 559, 611, 663, 715, 767, 819, 871, 923, 954, 1006, 1058, 1110]
const bandEdges = [207, 248, ...hours, 1140]
const ema = [[447, 99], [470, 105], [490, 112], [523, 122], [580, 133], [617, 143], [663, 155], [697, 168], [747, 185], [767, 188], [830, 203], [850, 206], [880, 213], [937, 224], [967, 229], [1000, 236], [1040, 243], [1080, 250], [1136, 256]]
    .map(([x, y]) => `${x - 207},${y - 88}`).join(' ')

const PlotBack = () => (
    <PlotLayer width="933" height="498" shapeRendering="crispEdges">
        {bandEdges.slice(0, -1).map((x, i) => (
            <rect key={x} x={x - 207} y="0" width={bandEdges[i + 1] - x} height="498" fill={i % 2 ? '#101010' : '#1a1a1a'} />
        ))}
        {prices.map(p => <line key={p} x1="0" x2="933" y1={priceY(p)} y2={priceY(p)} stroke="#383838" strokeDasharray="2 2" />)}
        {bandEdges.slice(1, -1).map(x => <line key={x} x1={x - 206.5} x2={x - 206.5} y1="0" y2="498" stroke="#383838" strokeDasharray="2 2" />)}
    </PlotLayer>
)

const PlotFront = () => (
    <PlotLayer width="933" height="498" $z={2} shapeRendering="crispEdges">
        <line x1="747.5" x2="747.5" y1="0" y2="498" stroke="#4e4e4e" />
        <rect x="291.500" y="0" width="3" height="498" fill="#9090dc" />
        <polyline points={ema} fill="none" stroke="#c99655" strokeWidth="1.2" shapeRendering="auto" />
        <rect x="0" y="141" width="933" height="2" fill="#8f1515" />
        <rect x="0" y="187" width="933" height="2" fill="#6e1010" />
        <rect x="0" y="232" width="933" height="2" fill="#931616" />
        <rect x="0" y="259" width="933" height="2" fill="#f01010" />
        {candles.map((c, i) => {
            const color = c.up ? '#10e010' : '#f00000'
            return (
                <g key={i}>
                    <line x1={c.x + 0.5} x2={c.x + 0.5} y1={c.wickTop} y2={c.wickBottom} stroke={c.up ? '#0ccc0c' : '#e00000'} />
                    <rect x={c.x - 1.5} y={c.top + 0.5} width="3" height={Math.max(c.bottom - c.top, 1)} fill={c.up ? '#ececec' : color} stroke={color} />
                </g>
            )
        })}
    </PlotLayer>
)

const OLIVE = '#757500'
const GREEN = '#0b7d0b'
const RED = '#e00000'
const levelsLeft = [
    ['PP: -47.5', OLIVE], ['BT3: 5072.87', GREEN], ['BT2: 5055.4', GREEN], ['BT1: 5046.91', GREEN], ['BUY: 5031.29', GREEN], ['BSL: 5016.96', OLIVE],
    ['SSL: 4967.04', OLIVE], ['SELL: 4952.71', RED], ['ST1: 4937.09', RED], ['ST2: 4928.6', RED], ['ST3: 4911.13', RED],
]
const levelsRight = [
    ['SDANGER: 5021.45', RED], ['STOUCHSL: 5015.21', RED], ['SELL: 5003.98', RED], ['ST1: 4988.02', RED], ['ST2: 4972.18', RED], ['OP: 4992', OLIVE],
    ['BT2: 5011.27', GREEN], ['BT1: 5001.98', GREEN], ['BUY: 4980.02', GREEN], ['BTOUCHSL: 4968.79', GREEN], ['BDANGER: 4962.55', GREEN],
]
const times = [
    [219, '23:00'], [249, 'Oct 31', 1], [302, '11:00'], [353, '12:00'], [405, '13:00'], [457, '14:00'], [509, '15:00'], [561, '16:00'], [613, '17:00'], [665, '18:00'],
    [717, '19:00'], [770, '20:00'], [821, '21:00'], [873, '22:00'], [925, '23:00'], [956, 'Nov', 1], [1008, '11:00'], [1060, '12:00'], [1112, '13:00'],
]
const menus = [['File', 30], ['Edit', 32], ['View', 35], ['Insert', 40], ['Format', 47], ['Symbol', 50], ['Analysis', 52], ['Tools', 39], ['Window', 53], ['Help', 40]]
const treeItems = [
    ['All', <AzIcon />], ['Markets', <FolderIcon />, 1], ['Groups', <FolderIcon />, 1], ['Sectors', <FolderIcon />, 1], ['GICS', <FolderIcon open />, 1, 1],
    ['ICB', <FolderIcon />, 1], ['Watch Lists', <FolderIcon />, 1], ['Favourites', <HeartIcon />], ['Indexes', <IndexIcon />],
]
const symbols = ['M_COTTON-N...', 'M_COTTON-O...', 'M_CPO-AUG', 'M_CPO-DEC', 'M_CPO-JAN', 'M_CPO-NOV', 'M_CPO-OCT', 'M_CPO-SEP', 'M_CRUDEOIL-...', 'M_CRUDEOIL-...', 'M_CRUDEOIL-J...', 'M_CRUDEOIL-...', 'M_CRUDEOIL-...']
const sheets = ['Sheet 3', 'Sheet 2', 'Sheet 4', 'Sheet 5', 'Sheet 6', 'Sheet 7', 'Sheet 8']

const Toolbars = () => (
    <ToolBar>
        <ToolGroup $w={310}>
            <Grip />
            <ToolBtn><DocIcon /></ToolBtn><ToolBtn><OpenIcon /></ToolBtn><ToolBtn><SaveIcon /></ToolBtn><ToolBtn><SaveAllIcon /></ToolBtn>
            <ToolSep />
            <ToolBtn $w={19.5}><PrintIcon /></ToolBtn><ToolBtn $w={19.5}><CutIcon /></ToolBtn><ToolBtn $w={19.5}><CopyIcon /></ToolBtn><ToolBtn $w={19.5}><PasteIcon /></ToolBtn><ToolBtn $w={19.5}><DeleteIcon /></ToolBtn>
            <ToolSep />
            <ToolBtn><UndoIcon /></ToolBtn>
            <ToolSep />
            <ToolBtn $w={20}><NavIcon bg="#0a7d28" dir={-1} /></ToolBtn><ToolBtn $w={20}><NavIcon bg="#8f9aa8" dir={1} /></ToolBtn>
            <ToolSep />
            <ToolBtn><InfoIcon /></ToolBtn><ToolBtn><TableIcon /></ToolBtn>
            <Overflow />
        </ToolGroup>
        <ToolGroup $w={153}>
            <Grip />
            <Combo $w={85}>M_CRUDEOIL-I<ComboArrow /></Combo>
            <Combo $w={49}>5m<ComboArrow /></Combo>
            <Overflow />
        </ToolGroup>
        <ToolGroup $w={112}>
            <Grip />
            <ToolBtn $w={21}><GearIcon /></ToolBtn><ToolBtn><GemIcon /></ToolBtn><ToolBtn $w={18}><GlassesIcon /></ToolBtn><ToolBtn $w={24}><MapIcon /></ToolBtn>
            <Overflow />
        </ToolGroup>
        <ToolGroup $w={48}>
            <Grip />
            <ToolBtn $w={20}><PenIcon /></ToolBtn><ComboArrow $bare $w={8} />
            <Overflow />
        </ToolGroup>
        <ToolGroup $w={139}>
            <Grip />
            <ToolBtn><LineTool d="M2 4h12M2 8h12M2 12h12" /></ToolBtn>
            <ToolBtn><LineTool d="M3 2v12M6 2v12M9 2v12M13 2v12" /></ToolBtn>
            <ToolBtn><LineTool d="M2 14L13 3M2 14l12-5M2 14h12" /></ToolBtn>
            <ToolBtn $w={20}><LineTool d="M2 13a6 6 0 0112 0M4.500 13a3.500 3.500 0 017 0" /></ToolBtn>
            <ToolBtn><LineTool d="M2.500 2.500h11v11h-11zM8 2v12M2 8h12" /></ToolBtn>
            <ToolBtn><LineTool d="M2 14V2M2 14h12M2 14l11-9M2 14L9 3M2 14l12-5" /></ToolBtn>
            <Overflow />
        </ToolGroup>
        <ToolGroup $w={270}>
            <Grip />
            <ToolBtn $on><ArrowCursor /></ToolBtn>
            <ToolBtn><LineTool d="M3 13L13 3" dots={[[3, 13], [13, 3]]} /></ToolBtn>
            <ToolBtn $w={20}><LineTool d="M1 15L15 1" dots={[[5, 11], [11, 5]]} /></ToolBtn>
            <ToolBtn><LineTool d="M1 15L15 1" dots={[[4, 12], [11, 5]]} /></ToolBtn>
            <ToolBtn><LineTool d="M8 2v12" dots={[[8, 2], [8, 14]]} /></ToolBtn>
            <ToolBtn><LineTool d="M2 8h12" dots={[[2, 8], [14, 8]]} /></ToolBtn>
            <ToolBtn><LineTool d="M2 13l8-10M7 13l8-10" /></ToolBtn>
            <ToolBtn><LineTool d="M2 13L9 2M6 14l7-11M9 15l6-10M2 8h12" /></ToolBtn>
            <ToolBtn><LineTool d="M2.500 3.500h11v9h-11z" /></ToolBtn>
            <ToolBtn><I><ellipse cx="8" cy="8" rx="6.500" ry="4.500" stroke="#222" /></I></ToolBtn>
            <ToolBtn><ToolText>abc</ToolText></ToolBtn>
            <ToolBtn><LineTool d="M8 2.500l6 10.500H2z" /></ToolBtn>
            <ToolBtn><LineTool d="M2 6l8-4M6 8l8-4M2 14l8-4M6 12l8-4" /></ToolBtn>
            <Overflow />
        </ToolGroup>
        <ToolGroup $w={151}>
            <Grip />
            <ToolBtn $w={20}><ZoomIcon c="#18d818" plus /></ToolBtn>
            <ToolBtn $w={20}><ZoomIcon c="#e8d818" /></ToolBtn>
            <ToolBtn $on><ToolLetter>i</ToolLetter></ToolBtn>
            {['h', 'd', 'w', 'm'].map(t => <ToolBtn key={t} $w={19.5}><ToolLetter>{t}</ToolLetter></ToolBtn>)}
            <Overflow />
        </ToolGroup>
    </ToolBar>
)

const SymbolsPanel = () => (
    <Panel>
        <PanelHead>
            Symbols
            <MdiButtons>
                <Pin size={11} color="#e6ebf3" />
                <X size={12} color="#e6ebf3" />
            </MdiButtons>
        </PanelHead>
        <SearchRow>
            <SearchInput>&lt;Search&gt;</SearchInput>
            <GoIcon />
            <ToolBtn $w={20}><ListIcon /></ToolBtn>
            <ComboArrow $bare />
        </SearchRow>
        <Tree>
            {treeItems.map(([label, icon, expand, sel]) => (
                <TreeRow key={label} $sel={sel}>
                    <Expander $show={expand} />
                    {icon}
                    <span>{label}</span>
                </TreeRow>
            ))}
        </Tree>
        <Splitter />
        <ListWrap>
            <ListMain>
                <ListHead>
                    <ListHeadCell>Symbol <SortIcon /></ListHeadCell>
                    <span>Full name</span>
                </ListHead>
                {symbols.map((s, i) => <ListRow key={i} $odd={i % 2} $sel={i === 11}>{s}</ListRow>)}
            </ListMain>
            <VScroll>
                <span>▲</span>
                <ScrollThumb />
                <span>▼</span>
            </VScroll>
        </ListWrap>
        <HScroll>
            ◀<HThumb>|||</HThumb>▶<Corner />
        </HScroll>
    </Panel>
)

const ChartArea = () => (
    <ChartFrame>
        <ChartRow>
            <Plot>
                <PlotBack />
                <InfoBox>
                    <InfoLine $w={606} $h={12} $pad={1}>M_CRUDEOIL-NOV - 5-minute 31-10-2014 14:50:00 Open 4951, Hi 4952, Lo 4947, Close 4951 (-0.0%)</InfoLine>
                    <InfoLine $w={223} $h={13} $pad={29}>= 4,951.00, <EmaText>EMA1(Close,250)</EmaText> = 5,005.36</InfoLine>
                </InfoBox>
                <Levels $x={20} $y={33}>
                    {levelsLeft.map(([t, c]) => <Level key={t} $c={c}>{t}</Level>)}
                </Levels>
                <Levels $x={148} $y={50}>
                    {levelsRight.map(([t, c]) => <Level key={t} $c={c}>{t}</Level>)}
                </Levels>
                <Watermark $x={436} $y={26}>MODHALEE</Watermark>
                <Watermark $x={403} $y={61}>CRUDE MAGIC</Watermark>
                <PlotFront />
                <Note $x={440} $y={124} $w={15} $h={20}>sl</Note>
                <Note $x={469} $y={167} $w={31} $h={20}>sell</Note>
                <Note $x={572} $y={212} $w={27} $h={25}>t1</Note>
                <Note $x={611} $y={243} $w={20} $h={22}>t2</Note>
            </Plot>
            <PriceAxis>
                <PriceList>
                    {prices.map(p => <PriceRow key={p}>{p.toLocaleString('en-US')}</PriceRow>)}
                </PriceList>
                <PriceTag $x={8} $y={161} $w={45} $bg="#ffb265" $c="#3a2a10">4,958.81</PriceTag>
                <PriceTag $x={2} $y={218} $w={40} $bg="#000" $c="#fff" $arrow>4,940</PriceTag>
                <PriceTag $x={8} $y={232} $w={40} $bg="transparent" $c="#333">4,940</PriceTag>
                <RedMark />
            </PriceAxis>
        </ChartRow>
        <TimeAxis>
            {times.map(([x, t, b]) => <TimeTag key={x} $x={x - 207} $bold={b}>{t}</TimeTag>)}
            <Cason>Cason</Cason>
        </TimeAxis>
        <SheetBar>
            <SheetNav $dim>|◀</SheetNav><SheetNav $dim>◀</SheetNav><SheetNav>▶</SheetNav><SheetNav>▶|</SheetNav>
            <SheetTabs>
                {sheets.map(s => <SheetTab key={s}>{s}</SheetTab>)}
            </SheetTabs>
            <ActiveSheet>Sheet 1</ActiveSheet>
            <SheetIcon $x={3}><LockIcon /></SheetIcon>
            <SheetIcon>-S</SheetIcon>
            <SheetIcon>-I</SheetIcon>
            <SheetNav>◀</SheetNav>
            <SheetScroll $x={411} />
            <SheetNav $x={49}>▶</SheetNav>
        </SheetBar>
    </ChartFrame>
)

const App = () => {
    return (
        <Page>
            <GlobalStyle />
            <TitleBar>
                <ProgramLogo s={15} />
                AmiBroker - [M_CRUDEOIL-NOV -  - 5-minute]
                <WindowButtons>
                    <WindowButton $w={27}><I s={10}><path d="M3 12h10" stroke="#fff" strokeWidth="3" /></I></WindowButton>
                    <WindowButton $w={22}><I s={11}><path d="M3 5h8v9H3zM6 5V2h8v8h-3" stroke="#fff" strokeWidth="1.6" /></I></WindowButton>
                    <WindowButton $w={40} $close><X size={12} color="#fff" strokeWidth={3} /></WindowButton>
                </WindowButtons>
            </TitleBar>
            <MenuBar>
                <Grip />
                <MenuItem $w={8} />
                {menus.map(([m, w]) => <MenuItem key={m} $w={w}>{m}</MenuItem>)}
                <MdiButtons>
                    <I s={10}><path d="M2 13h11" stroke="#222" strokeWidth="2.500" /></I>
                    <I s={11}><path d="M3 5h8v9H3zM6 5V2h8v8h-3" stroke="#222" strokeWidth="1.5" /></I>
                    <X size={12} color="#222" />
                </MdiButtons>
            </MenuBar>
            <Toolbars />
            <Workspace>
                <SideTabs>
                    <SideTab $h={45}>Layers</SideTab>
                    <SideTab $h={39} $gap={10}>Charts</SideTab>
                    <SideTab $h={73}>Interpretation</SideTab>
                    <SideTab $h={50}>Notepad</SideTab>
                </SideTabs>
                <SymbolsPanel />
                <Doc>
                    <DocTabs>
                        <DocTab $w={85}><ChartTabIcon />AA (5-minute)</DocTab>
                        <DocTab $w={186} $on><ChartTabIcon />M_CRUDEOIL-NOV (5-minute)<TabClose><X size={11} color="#333" /></TabClose></DocTab>
                        <NewTab><I s={13}><circle cx="8" cy="8" r="6" stroke="#8494ac" /><path d="M8 4v8M4 8h8" stroke="#8494ac" /></I></NewTab>
                        <DocArrows>
                            <I s={12}><path d="M10 3L5 8l5 5z" stroke="#b8c4d6" /></I>
                            <I s={12}><path d="M6 3l5 5-5 5z" stroke="#b8c4d6" /></I>
                            <I s={10}><path d="M2 6h12l-6 6z" fill="#c8d2e0" /></I>
                        </DocArrows>
                    </DocTabs>
                    <ChartArea />
                </Doc>
            </Workspace>
            <StatusBar>
                <StatusCell $w={13}>X:</StatusCell>
                <StatusCell $w={13}>Y:</StatusCell>
                <StatusCell $w={177}>NYSE, Group 0, Undefined, Undefined</StatusCell>
                <StatusCell $w={72}>RTDSDatabase</StatusCell>
                <StatusCell $w={39} />
                <StatusCell $w={41} $pad={5}>3809M</StatusCell>
                <StatusCell $w={24} $dim $last>CAP</StatusCell>
            </StatusBar>
            <TaskBar>
                <TaskSlot $w={49}><Orb><WindowsFlag /></Orb></TaskSlot>
                <TaskSlot><NotepadIcon /></TaskSlot>
                <TaskSlot><WaveTile /></TaskSlot>
                <TaskSlot $open><ChromeIcon /></TaskSlot>
                <TaskSlot $open><TorrentIcon /></TaskSlot>
                <TaskSlot $open><BingScreen /></TaskSlot>
                <TaskSlot $open><SkypeIcon /></TaskSlot>
                <TaskSlot $open><BlackberryTile><FaBlackberry size={16} color="#f4f4f4" /></BlackberryTile></TaskSlot>
                <TaskSlot $open><RTile /></TaskSlot>
                <TaskSlot $on><ProgramLogo /></TaskSlot>
                <Tray>
                    <TraySearch>
                        <BingBox><I s={12}><path d="M4 1v11l3 2 6-3.500V8L8 6l1 3-2 1V2z" fill="#7a4a00" /></I></BingBox>
                        <SearchText>hobbit final tra</SearchText>
                        <Search size={14} color="#444" />
                    </TraySearch>
                    <TrayIcon $w={14}><I s={8}><path d="M1 11l7-7 7 7z" fill="#f0f0f0" /></I></TrayIcon>
                    <TrayIcon $w={26}><I><path d="M3 6h10v6H3zM5 2v4M11 2v4M8 12v3" stroke="#f0f0f0" strokeWidth="1.6" /></I></TrayIcon>
                    <TrayIcon $w={20}><I><rect x="4" y="3" width="10" height="9" stroke="#f0f0f0" /><rect x="1" y="1" width="4" height="5" fill="#f0f0f0" /><path d="M6 14h6" stroke="#f0f0f0" /></I></TrayIcon>
                    <TrayIcon $w={20}><I><rect x="1" y="1" width="14" height="14" rx="2" fill="#3ccf3c" /><path d="M3 6h10M10 3l3 3M13 10H3M6 13l-3-3" stroke="#fff" strokeWidth="1.5" /></I></TrayIcon>
                    <Clock>13:27<br />08-11-2014</Clock>
                    <ShowDesktop />
                </Tray>
            </TaskBar>
        </Page>
    )
}

export default App
